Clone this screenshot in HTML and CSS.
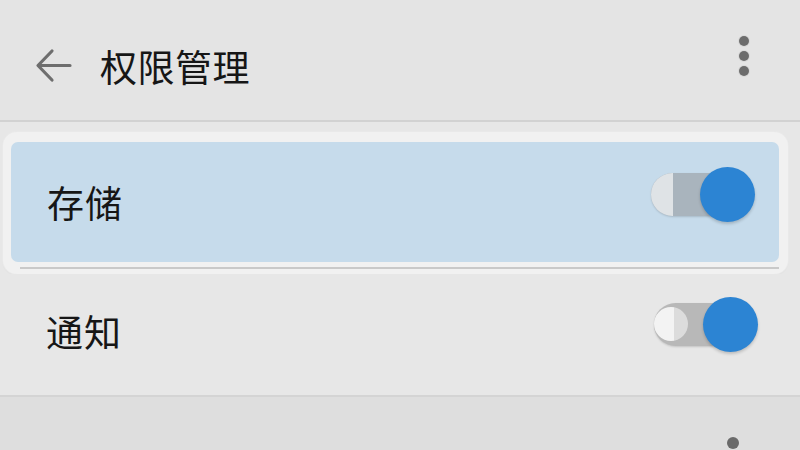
FILE: index.html
```html
<!DOCTYPE html>
<html lang="zh-CN">
<head>
<meta charset="utf-8">
<title>权限管理</title>
<link rel="stylesheet" href="styles.css">
</head>
<body>
<div class="screen">
  <header class="appbar">
    <button class="icon-btn back" aria-label="返回">
      <svg width="40" height="40" viewBox="0 0 40 40">
        <path d="M37 19.5H6 M19 5L5 19.5L19 34" fill="none" stroke="#6e6e6e" stroke-width="3.2" stroke-linecap="round" stroke-linejoin="round"/>
      </svg>
    </button>
    <h1 class="title">权限管理</h1>
    <button class="icon-btn more" aria-label="更多">
      <span class="dot"></span><span class="dot"></span><span class="dot"></span>
    </button>
  </header>

  <main class="list">
    <div class="row-frame">
      <div class="row row-selected">
        <span class="label">存储</span>
        <span class="switch switch-blue"><span class="knob-off"></span><span class="knob"></span></span>
      </div>
      <div class="frame-rule"></div>
    </div>
    <div class="row row-plain">
      <span class="label">通知</span>
      <span class="switch switch-grey"><span class="knob-off"></span><span class="knob"></span></span>
    </div>
    <div class="footer-area">
      <span class="peek"></span>
    </div>
  </main>
</div>
</body>
</html>
```
FILE: styles.css
```css
* { box-sizing: border-box; }

html, body {
  margin: 0;
  padding: 0;
}

body {
  width: 800px;
  height: 450px;
  overflow: hidden;
  background: #e6e6e6;
  font-family: "Noto Sans CJK SC", "Noto Sans", sans-serif;
  color: #1b1b1b;
}

.screen {
  display: flex;
  flex-direction: column;
  height: 450px;
}

/* top app bar */
.appbar {
  height: 122px;
  flex: none;
  display: flex;
  align-items: center;
  padding: 12px 34px 0 33px;
  background: #e4e4e4;
  border-bottom: 2px solid #d2d2d2;
}

.icon-btn {
  border: 0;
  padding: 0;
  background: none;
  display: flex;
}

.back { width: 40px; height: 40px; }

.title {
  margin: 0 0 0 27px;
  font-size: 37px;
  font-weight: 400;
  letter-spacing: 0.5px;
  line-height: 1;
  color: #161616;
  flex: 1;
}

.more {
  flex-direction: column;
  gap: 5px;
  margin-top: -20px;
  margin-right: 17px;
}

.dot {
  width: 10px;
  height: 10px;
  border-radius: 50%;
  background: #6c6c6c;
  box-shadow: 0 0 0 1px #d9d9d9;
}

/* list */
.list {
  flex: 1;
  display: flex;
  flex-direction: column;
  padding-top: 10px;
  background: #e7e7e7;
}

.row-frame {
  margin: 0 12px 0 3px;
  padding: 10px 9px 0 8px;
  height: 142px;
  border-radius: 14px;
  background: #f1f1f1;
  box-shadow: 0 0 0 1px #e9e9e9, 0 1px 2px rgba(0,0,0,0.06);
}

.row {
  display: flex;
  align-items: center;
  justify-content: space-between;
}

.row-selected {
  height: 120px;
  border-radius: 7px;
  background: #c6dbeb;
  padding: 0 24px 0 36px;
}

.frame-rule {
  height: 2px;
  margin: 5px 0 0 9px;
  background: #c9c9c9;
}

.row-plain {
  height: 123px;
  padding: 0 42px 0 46px;
  border-bottom: 2px solid #d4d4d4;
  background: #e7e7e7;
}

.label {
  font-size: 37px;
  font-weight: 400;
  line-height: 1;
  letter-spacing: 1px;
  color: #161616;
}

.row-plain .label { margin-top: -6px; }

/* toggle */
.switch {
  position: relative;
  width: 104px;
  height: 56px;
  display: block;
  margin-top: -14px;
}

.switch::before {
  content: "";
  position: absolute;
  left: 0;
  top: 6px;
  width: 90px;
  height: 43px;
  border-radius: 22px;
  background: #a9b4bd;
  box-shadow: 0 1px 2px rgba(0,0,0,0.15);
}

.knob-off {
  position: absolute;
  left: 0;
  top: 6px;
  width: 22px;
  height: 43px;
  border-radius: 22px 0 0 22px;
  background: #dfe3e6;
}

.knob {
  position: absolute;
  left: 49px;
  top: 0;
  width: 55px;
  height: 55px;
  border-radius: 50%;
  background: #2c84d3;
  box-shadow: 0 2px 3px rgba(0,0,0,0.18);
}

.switch-grey::before { background: #b8b8b8; }

.switch-grey .knob-off {
  width: 34px;
  height: 34px;
  top: 10px;
  left: 0;
  border-radius: 50%;
  background: linear-gradient(90deg, #f3f3f3 0 60%, #dcdcdc 60%);
}

.switch-grey { margin-top: -20px; }

.footer-area {
  flex: 1;
  background: #dedede;
  position: relative;
}

.peek {
  position: absolute;
  left: 727px;
  top: 40px;
  width: 12px;
  height: 12px;
  border-radius: 50%;
  background: #6a6a6a;
}
```
